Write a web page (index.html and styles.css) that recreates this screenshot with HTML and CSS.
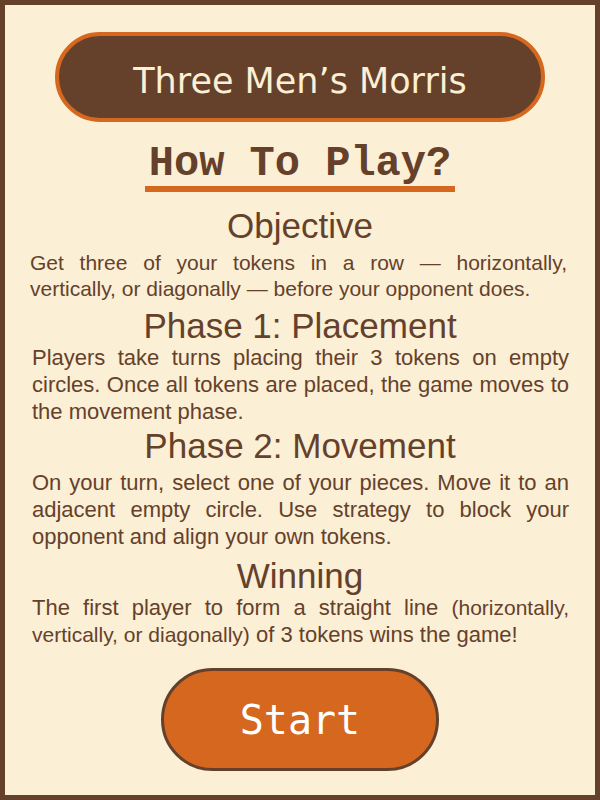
FILE: index.html
```html
<!DOCTYPE html>
<html lang="en">
<head>
<meta charset="utf-8">
<meta name="viewport" content="width=device-width, initial-scale=1">
<title>Three Men’s Morris</title>
<link rel="stylesheet" href="styles.css">
</head>
<body>
<main class="screen">
  <h1 class="banner">Three Men’s Morris</h1>
  <h2 class="subtitle">How To Play?</h2>
  <section class="rule rule-objective">
    <h3 class="rule-title">Objective</h3>
    <p class="rule-text compact">Get three of your tokens in a row — horizontally, vertically, or diagonally — before your opponent does.</p>
  </section>
  <section class="rule rule-placement">
    <h3 class="rule-title">Phase 1: Placement</h3>
    <p class="rule-text">Players take turns placing their 3 tokens on empty circles. Once all tokens are placed, the game moves to the movement phase.</p>
  </section>
  <section class="rule rule-movement">
    <h3 class="rule-title">Phase 2: Movement</h3>
    <p class="rule-text">On your turn, select one of your pieces. Move it to an adjacent empty circle. Use strategy to block your opponent and align your own tokens.</p>
  </section>
  <section class="rule rule-winning">
    <h3 class="rule-title">Winning</h3>
    <p class="rule-text">The first player to form a straight line <span class="compact">(horizontally, vertically, or diagonally)</span> of 3 tokens wins the game!</p>
  </section>
  <button class="start" type="button">Start</button>
</main>
</body>
</html>
```
FILE: styles.css
```css
* {
  box-sizing: border-box;
}

body {
  margin: 0;
  color: #65412b;
  background: #fbefd5;
  font-family: "Liberation Sans", Arial, sans-serif;
}

h1, h2, h3, p {
  margin: 0;
  font-weight: 400;
}

.screen {
  display: flex;
  flex-direction: column;
  align-items: center;
  min-height: 100vh;
  padding: 27px 25px 20px;
  border: 5px solid #65412b;
}

.banner {
  width: 100%;
  max-width: 490px;
  padding: 24px 20px 16px;
  border: 4px solid #d5671e;
  border-radius: 45px;
  background: #65412b;
  color: #fbefd5;
  font-family: "DejaVu Sans", Verdana, sans-serif;
  font-size: 35px;
  line-height: 42px;
  text-align: center;
}

.subtitle {
  margin-top: 20px;
  padding: 0 4px;
  border-bottom: 6px solid #d5671e;
  font-family: "Courier New", "Liberation Mono", monospace;
  font-size: 42px;
  font-weight: 700;
  line-height: 44px;
}

.rule {
  width: 100%;
}

.rule-objective {
  margin-top: 16px;
}

.rule-placement {
  margin-top: 6px;
}

.rule-movement {
  margin-top: 3px;
}

.rule-winning {
  margin-top: 8px;
}

.rule-title {
  font-size: 35px;
  line-height: 36px;
  text-align: center;
}

.rule-text {
  padding: 0 1px 0 2px;
  font-size: 22px;
  line-height: 27px;
  text-align: justify;
}

.compact {
  font-size: 21px;
}

.rule-objective .rule-text {
  padding: 6px 3px 0 0;
  line-height: 26px;
}

.rule-movement .rule-text {
  padding-top: 5px;
}

.start {
  width: 278px;
  height: 103px;
  margin-top: 20px;
  border: 3px solid #65412b;
  border-radius: 52px;
  background: #d5671e;
  color: #fff;
  font-family: "Lucida Console", "DejaVu Sans Mono", monospace;
  font-size: 40px;
}
```
